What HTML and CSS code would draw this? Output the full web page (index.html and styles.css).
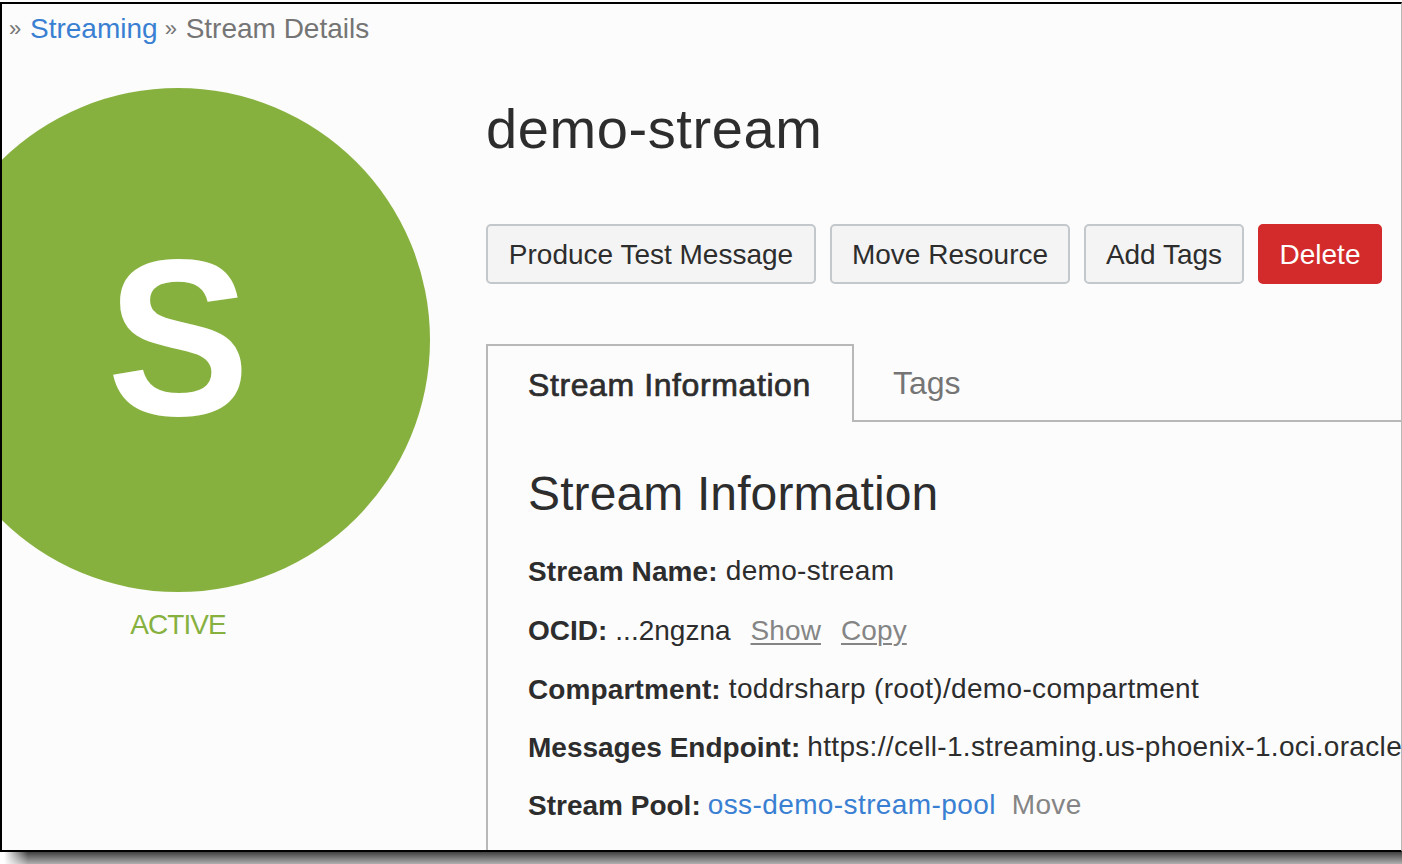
FILE: index.html
```html
<!DOCTYPE html>
<html lang="en">
<head>
<meta charset="utf-8">
<title>Stream Details</title>
<link rel="stylesheet" href="styles.css">
</head>
<body>
<div class="window">
  <nav class="breadcrumb">
    <span class="sep">»</span><a class="crumb link">Streaming</a><span class="sep">»</span><span class="crumb">Stream Details</span>
  </nav>
  <div class="layout">
    <aside class="status">
      <div class="avatar"><span class="avatar-letter">S</span></div>
      <div class="state">ACTIVE</div>
    </aside>
    <main class="details">
      <h1 class="title">demo-stream</h1>
      <div class="actions">
        <button class="btn produce">Produce Test Message</button>
        <button class="btn move-resource">Move Resource</button>
        <button class="btn add-tags">Add Tags</button>
        <button class="btn danger">Delete</button>
      </div>
      <div class="tabs">
        <div class="tab active"><span class="tab-label">Stream Information</span></div>
        <div class="tab inactive">Tags</div>
      </div>
      <section class="panel">
        <h2 class="heading">Stream Information</h2>
        <div class="row"><b class="label name">Stream Name:</b><span class="value">demo-stream</span></div>
        <div class="row"><b class="label ocid">OCID:</b><span class="value ocid-value">...2ngzna</span><a class="value action show">Show</a><a class="value action copy">Copy</a></div>
        <div class="row"><b class="label compartment">Compartment:</b><span class="value path">toddrsharp (root)/demo-compartment</span></div>
        <div class="row"><b class="label endpoint">Messages Endpoint:</b><span class="value url">https://cell-1.streaming.us-phoenix-1.oci.oracle</span></div>
        <div class="row"><b class="label pool">Stream Pool:</b><a class="value link pool-link">oss-demo-stream-pool</a><a class="value move">Move</a></div>
      </section>
    </main>
  </div>
</div>
<div class="shadow"></div>
</body>
</html>
```
FILE: styles.css
```css
* { box-sizing: border-box; }
body {
  margin: 0;
  padding-top: 2px;
  height: 864px;
  overflow: hidden;
  background: #fff;
  color: #2d2d2d;
  font: 28px/36px "Liberation Sans", Arial, sans-serif;
}
.window {
  height: 850px;
  overflow: hidden;
  background: #fcfcfc;
  border: solid #000;
  border-width: 2px 1px 2px 2px;
  border-right-color: #b8b8b8;
}
.breadcrumb {
  display: flex;
  height: 84px;
  padding: 7px 0 0 7px;
  color: #757575;
}
.sep { width: 21px; font-size: 22px; line-height: 36px; }
.crumb { white-space: nowrap; }
.breadcrumb .link { margin-right: 7px; }
.link { color: #3a80d2; }
.layout { display: flex; }
.status { width: 428px; flex: none; }
.avatar {
  width: 504px;
  height: 504px;
  margin-left: -76px;
  display: flex;
  justify-content: center;
  border-radius: 50%;
  background: #87b13f;
}
.avatar-letter {
  color: #fff;
  font-size: 223px;
  font-weight: bold;
  line-height: 499px;
  transform: scaleX(0.96);
}
.state {
  width: 352px;
  padding-top: 15px;
  text-align: center;
  color: #87b13f;
  letter-spacing: -0.9px;
}
.details { flex: none; width: 916px; margin-left: 56px; }
.title {
  margin: 0;
  height: 136px;
  padding-top: 10px;
  font-size: 56px;
  line-height: 62px;
  font-weight: normal;
  letter-spacing: 0.6px;
}
.actions { display: flex; gap: 14px; height: 120px; }
.btn {
  height: 60px;
  padding: 1px 0 0;
  border: 2px solid #c3c8cc;
  border-radius: 5px;
  background: #f4f4f4;
  color: #2d2d2d;
  font: 28px/36px "Liberation Sans", Arial, sans-serif;
  white-space: nowrap;
}
.produce { width: 330px; }
.move-resource { width: 240px; }
.add-tags { width: 160px; }
.btn.danger { width: 124px; background: #d32b2b; border-color: #d32b2b; color: #fff; }
.tabs { display: flex; height: 78px; font-size: 32px; line-height: 40px; }
.tab.active {
  width: 368px;
  padding: 19px 0 0 40px;
  border: solid #b8b8b8;
  border-width: 2px 2px 0;
}
.tab-label { letter-spacing: 0.6px; -webkit-text-stroke: 0.7px #2d2d2d; }
.tab.inactive {
  flex: 1;
  padding: 19px 0 0 39px;
  color: #757575;
  border-bottom: 2px solid #b8b8b8;
}
.panel { height: 440px; padding: 44px 0 0 40px; border-left: 2px solid #b8b8b8; }
.heading {
  height: 87px;
  margin: 0;
  font-size: 48px;
  line-height: 56px;
  font-weight: normal;
  letter-spacing: 0.12px;
}
.row { display: flex; height: 58.5px; white-space: nowrap; }
.label { width: max-content; padding-top: 1px; }
.name, .compartment { letter-spacing: 0.12px; }
.compartment { padding-top: 2px; }
.value { margin-left: 8px; letter-spacing: 0.33px; }
.path { padding-top: 1px; }
.action { margin-left: 20px; padding-top: 1px; color: #858585; letter-spacing: 0.1px; text-decoration: underline; text-decoration-thickness: 2px; text-underline-offset: 3px; }
.ocid-value { padding-top: 1px; letter-spacing: 0; }
.endpoint, .pool { margin-right: -1px; }
.pool-link { letter-spacing: 0.4px; }
.move { margin-left: 16px; color: #858585; }
.shadow {
  height: 12px;
  background: linear-gradient(to right, #fff 0, #fff 4px, transparent 28px), linear-gradient(#404040, #b0b0b0);
}
```
